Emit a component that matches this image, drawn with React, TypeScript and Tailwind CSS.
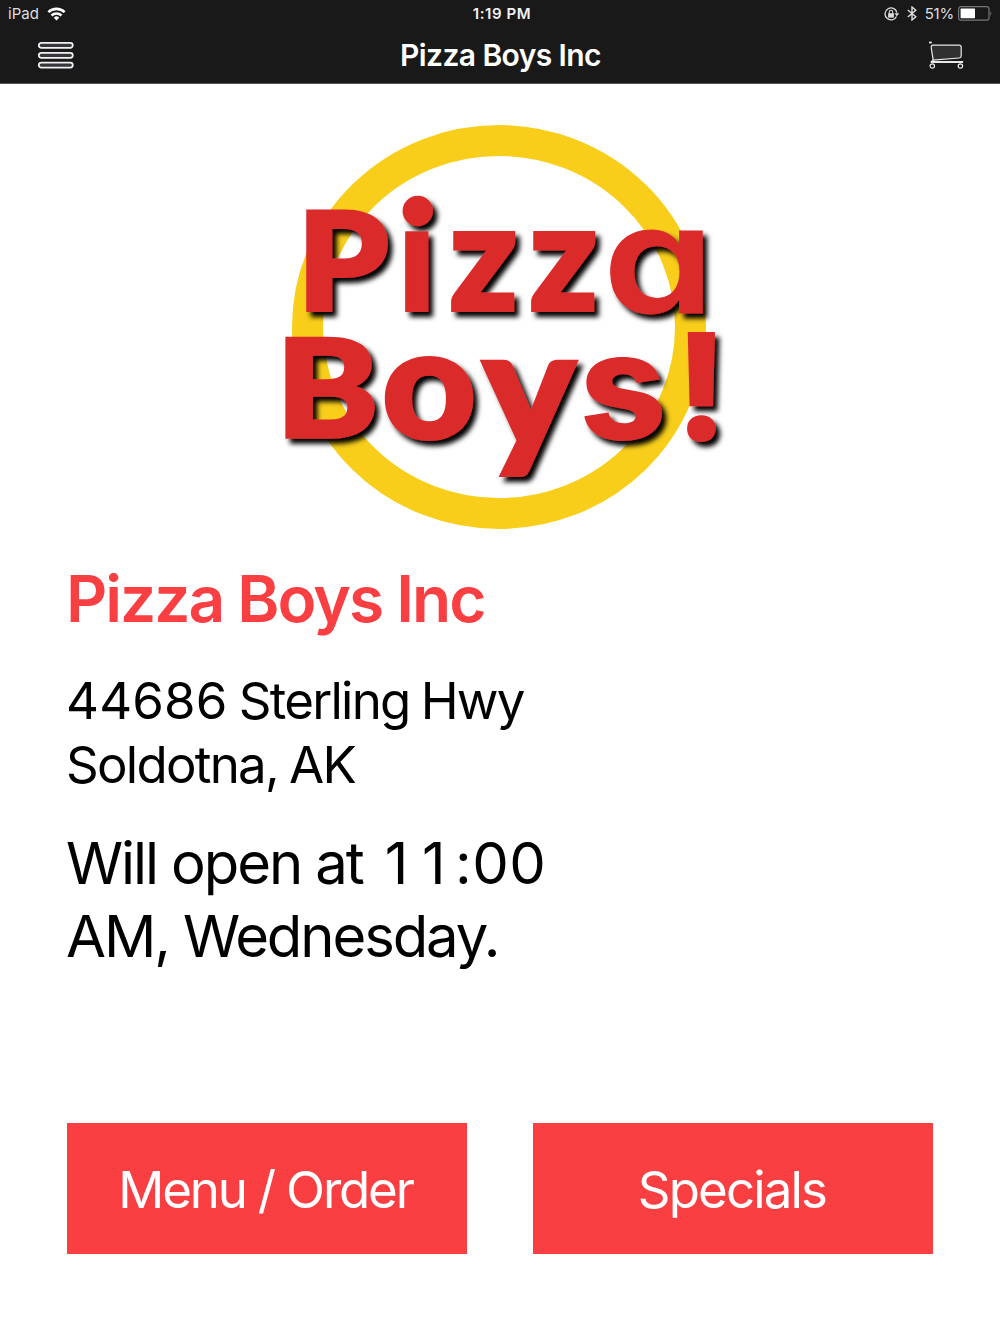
const lato = "font-['Lato',sans-serif] font-black stroke-[4px] stroke-[#da2c2b]";
const inter = "font-['Inter',sans-serif] font-extrabold";
const interAlt = "font-['Inter',sans-serif] font-semibold stroke-[1px] stroke-[#da2c2b] [font-feature-settings:'cv11']";

const logoLetters = [
  { char: "P", x: 297.3, y: 310, sx: 1.46, sy: 1.355, font: lato },
  { char: "ı", x: 398.6, y: 310, sx: 1.4, sy: 1.49, font: lato },
  { char: "z", x: 449.6, y: 310, sx: 1.47, sy: 1.485, font: lato },
  { char: "z", x: 529.6, y: 310, sx: 1.47, sy: 1.485, font: lato },
  { char: "a", x: 603, y: 313, sx: 1.78, sy: 1.5, font: interAlt },
  { char: "B", x: 275.7, y: 436.5, sx: 1.55, sy: 1.355, font: lato },
  { char: "o", x: 382, y: 438, sx: 1.63, sy: 1.52, font: lato },
  { char: "y", x: 482.7, y: 446.5, sx: 1.74, sy: 1.66, font: lato },
  { char: "s", x: 579.5, y: 438.5, sx: 1.52, sy: 1.48, font: inter },
  { char: "!", x: 674.5, y: 440, sx: 1.5, sy: 1.49, font: inter },
];

function Logo() {
  return (
    <svg className="block w-full h-[456px]" viewBox="0 84 1000 456">
      <defs>
        <filter id="shadow" x="-10%" y="-10%" width="120%" height="125%">
          <feDropShadow dx="4.5" dy="5" stdDeviation="2.7" floodColor="#000" floodOpacity="1" />
        </filter>
      </defs>
      <ellipse cx="499" cy="327" rx="191.5" ry="186.5" fill="none" stroke="#f8ce1b" strokeWidth="31" />
      <g filter="url(#shadow)" fill="#da2c2b" fontSize="100">
        {logoLetters.map((l, i) => (
          <text
            key={i}
            className={l.font}
            vectorEffect="non-scaling-stroke"
            transform={`translate(${l.x} ${l.y}) scale(${l.sx} ${l.sy})`}
          >
            {l.char}
          </text>
        ))}
        <circle cx="417.8" cy="211" r="15.2" />
      </g>
    </svg>
  );
}

function StatusBar() {
  return (
    <div className="flex h-[27px] items-center justify-between pl-2 pr-2 text-[15px] leading-none">
      <div className="flex w-[300px] items-center gap-2">
        <span className="text-[#dedede]">iPad</span>
        <svg className="h-[14px] w-[19px]" viewBox="0 0 18 14" fill="none" stroke="#fff" strokeWidth="2.6">
          <path d="M0.9 5.2a11.5 11.5 0 0 1 16.2 0" />
          <path d="M4 8.5a7.1 7.1 0 0 1 10 0" />
          <path d="M9 13.5 6.3 10.7a3.8 3.8 0 0 1 5.4 0z" fill="#fff" stroke="none" />
        </svg>
      </div>
      <span className="pl-1 font-semibold tracking-[0.6px] text-[#f2f2f2]">1:19 PM</span>
      <div className="flex w-[300px] items-center justify-end">
        <svg className="mr-[7px] h-[14px] w-4" viewBox="0 0 16 14" fill="none" stroke="#ddd" strokeWidth="1.3">
          <path d="M12.5 9.4A6 6 0 1 1 12.9 5.6" />
          <path d="M10.4 6.2h4.8l-2.4 3z" fill="#ddd" stroke="none" />
          <rect x="4.1" y="6.2" width="5.8" height="4.4" fill="#ddd" stroke="none" />
          <path d="M5.3 6.3V5a1.7 1.7 0 0 1 3.4 0v1.3" strokeWidth="1.1" />
        </svg>
        <svg className="mr-[8px] h-[15px] w-[10px]" viewBox="0 0 10 15" fill="none" stroke="#ddd" strokeWidth="1.4">
          <path d="M0.8 4 8.8 10.8 5 14V1l3.8 3.2L0.8 11" />
        </svg>
        <span className="mr-1 tracking-[-0.2px] text-[#dedede]">51%</span>
        <svg className="h-[15px] w-[34px]" viewBox="0 0 34 15" fill="none">
          <rect x="0.6" y="0.6" width="30.4" height="13.6" rx="2.5" stroke="#777" strokeWidth="1.2" />
          <rect x="2.6" y="2.6" width="14.4" height="9.6" rx="0.6" fill="#fff" />
          <path d="M32.4 5.2q1.8 2.2 0 4.6z" fill="#777" />
        </svg>
      </div>
    </div>
  );
}

function NavBar() {
  return (
    <div className="flex h-[56px] items-center justify-between pl-[38px] pr-[35px]">
      <svg className="h-7 w-9" viewBox="0 0 36 28" fill="#39353c" stroke="#f3f1f4" strokeWidth="1.7">
        <rect x="0.8" y="1.8" width="34" height="5" rx="2.5" />
        <rect x="0.8" y="11.8" width="34" height="5" rx="2.5" />
        <rect x="0.8" y="21.6" width="34" height="5" rx="2.5" />
      </svg>
      <h1 className="-ml-0.5 text-[30px] font-semibold tracking-[-0.6px] text-white">Pizza Boys Inc</h1>
      <svg className="h-7 w-9" viewBox="0 0 36 28" fill="none" stroke="#e8e8e8" strokeWidth="1.2">
        <path d="M0 1.5h2.8" strokeWidth="1.8" />
        <path d="M2.2 6.6q-0.2-2.4 1.8-2.4h26q2.2 0 2.2 2v8.8q0 1.8-2 2L4.2 19.2z" fill="#303030" />
        <path d="M4.2 19 2.4 20.6h31.8" />
        <path d="M2 21.4h32" />
        <circle cx="3.3" cy="25" r="2.2" />
        <circle cx="31.4" cy="25" r="2.2" />
      </svg>
    </div>
  );
}

export default function App() {
  return (
    <div className="h-[1334px] w-[1000px] overflow-hidden bg-white font-['Inter',sans-serif]">
      <header className="h-[84px] border-b border-[#555] bg-[#191919]">
        <StatusBar />
        <NavBar />
      </header>
      <main>
        <Logo />
        <section className="h-[583px] px-[66px] pt-[19px] text-black">
          <h2 className="text-[64px] leading-20 font-semibold tracking-[-2px] text-[#fa3f42]">Pizza Boys Inc</h2>
          <p className="mt-[30px] text-[51px] leading-[64px] tracking-[-1.75px] [word-spacing:-1.5px]">
            <span className="tracking-[0.2px]">44686</span> Sterling Hwy
            <br />
            Soldotna, AK
          </p>
          <p className="mt-[30px] text-[58px] leading-[73px] tracking-[-2.1px]">
            Will open at <span className="ml-2 tracking-[13.5px]">1</span>
            <span className="tracking-[9.5px]">1</span>
            <span className="tracking-[0.4px]">:00</span>
            <br />
            AM, Wednesday.
          </p>
        </section>
        <div className="flex gap-[66px] px-[67px] text-[51px] text-white">
          <button className="h-[131px] w-[400px] bg-[#fa3f42] pt-[3px] pr-[3px] tracking-[-2.2px]">Menu / Order</button>
          <button className="h-[131px] w-[400px] bg-[#fa3f42] pt-[3px] pr-0.5 tracking-[-1.85px]">Specials</button>
        </div>
      </main>
    </div>
  );
}
